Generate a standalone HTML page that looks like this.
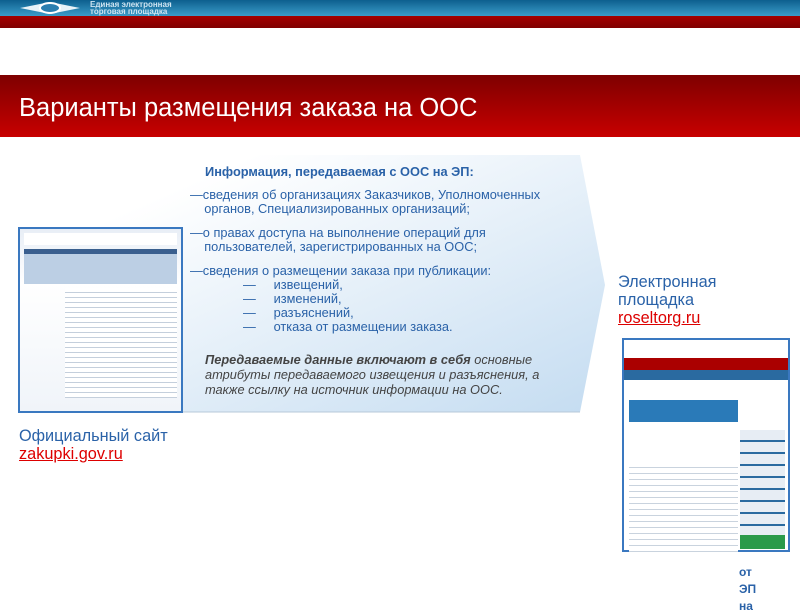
<!DOCTYPE html>
<html><head><meta charset="utf-8"><style>
body{margin:0;width:800px;height:600px;position:relative;overflow:hidden;background:#fff;font-family:"Liberation Sans",sans-serif}
.a{position:absolute}
.t{color:#2a62a8;font-size:12.8px;line-height:14px}
</style></head><body>
<div class="a" style="left:0;top:0;width:800px;height:16px;background:linear-gradient(#0d5f8e,#3b9cc9)"></div>
<svg class="a" style="left:20px;top:0" width="60" height="16"><polygon points="0,8 30,2 60,8 30,14" fill="#e8f2f8"/><ellipse cx="30" cy="8" rx="10" ry="5" fill="#2b7fb0" stroke="#fff" stroke-width="2"/></svg>
<div class="a" style="left:90px;top:1px;font-size:8px;line-height:7px;color:#cfe5f2;font-weight:bold">Единая электронная<br>торговая площадка</div>
<div class="a" style="left:0;top:16px;width:800px;height:12px;background:linear-gradient(#a40000,#800000)"></div>
<div class="a" style="left:0;top:75px;width:800px;height:62px;background:linear-gradient(#7e0000,#c80000)"></div>
<div class="a" style="left:19px;top:94px;font-size:25.5px;color:#fff">Варианты размещения заказа на ООС</div>
<svg class="a" style="left:0;top:150px" width="620" height="270"><defs><linearGradient id="g" x1="0" y1="0" x2="1" y2="1"><stop offset="0.2" stop-color="#fff"/><stop offset="1" stop-color="#c4dcf1"/></linearGradient></defs><polygon points="20,5 580,5 605,135 580,262 20,262" fill="url(#g)"/><line x1="20" y1="262" x2="580" y2="262" stroke="#b7c8d8"/></svg>
<div class="a" style="left:18px;top:227px;width:161px;height:182px;border:2px solid #3a78c0;background:linear-gradient(#e8eef6,#fff 30%,#f0f4f9)">
<div style="margin:4px;height:12px;background:#fff"></div><div style="margin:0 4px;height:5px;background:#3a5f8e"></div><div style="margin:0 4px;height:30px;background:#bccfe4"></div>
<div style="margin:4px 4px 0 45px;height:110px;background:repeating-linear-gradient(#fff 0 4px,#c4cfdc 4px 5px)"></div></div>
<div class="a t" style="left:205px;top:165px;font-weight:bold">Информация, передаваемая с ООС на ЭП:</div>
<div class="a t" style="left:190px;top:188px">—сведения об организациях Заказчиков, Уполномоченных<br>&nbsp;&nbsp;&nbsp;&nbsp;органов, Специализированных организаций;</div>
<div class="a t" style="left:190px;top:226px">—о правах доступа на выполнение операций для<br>&nbsp;&nbsp;&nbsp;&nbsp;пользователей, зарегистрированных на ООС;</div>
<div class="a t" style="left:190px;top:264px">—сведения о размещении заказа при публикации:</div>
<div class="a t" style="left:243px;top:278px">—&nbsp;&nbsp;&nbsp;&nbsp;&nbsp;извещений,<br>—&nbsp;&nbsp;&nbsp;&nbsp;&nbsp;изменений,<br>—&nbsp;&nbsp;&nbsp;&nbsp;&nbsp;разъяснений,<br>—&nbsp;&nbsp;&nbsp;&nbsp;&nbsp;отказа от размещении заказа.</div>
<div class="a" style="left:205px;top:352px;font-size:12.8px;line-height:15px;color:#444;font-style:italic"><b>Передаваемые данные включают в себя</b> основные<br>атрибуты передаваемого извещения и разъяснения, а<br>также ссылку на источник информации на ООС.</div>
<div class="a" style="left:19px;top:427px;font-size:16.3px;line-height:18px;color:#2a62a8">Официальный сайт<br><span style="color:#d00;text-decoration:underline">zakupki.gov.ru</span></div>
<div class="a" style="left:618px;top:273px;font-size:16.3px;line-height:18px;color:#2a62a8">Электронная<br>площадка<br><span style="color:#d00;text-decoration:underline">roseltorg.ru</span></div>
<div class="a" style="left:622px;top:338px;width:164px;height:210px;border:2px solid #3a78c0;background:#fff">
<div style="height:18px;background:#fff"></div><div style="height:12px;background:#a00"></div><div style="height:10px;background:#2a6aa0"></div>
<div style="margin:20px 50px 0 5px;height:22px;background:#2a7ab8"></div>
<div style="margin:40px 50px 0 5px;height:90px;background:repeating-linear-gradient(#fff 0 5px,#c9d3de 5px 6px)"></div>
<div style="position:absolute;right:3px;top:90px;width:45px;height:105px;background:repeating-linear-gradient(#e7edf4 0 10px,#2a6aa0 10px 12px)"></div>
<div style="position:absolute;right:3px;top:195px;width:45px;height:14px;background:#2a9a4a"></div></div>
<div class="a" style="left:739px;top:564px;font-size:12px;line-height:17px;color:#2a62a8;font-weight:bold">от<br>ЭП<br>на</div>
</body></html>
